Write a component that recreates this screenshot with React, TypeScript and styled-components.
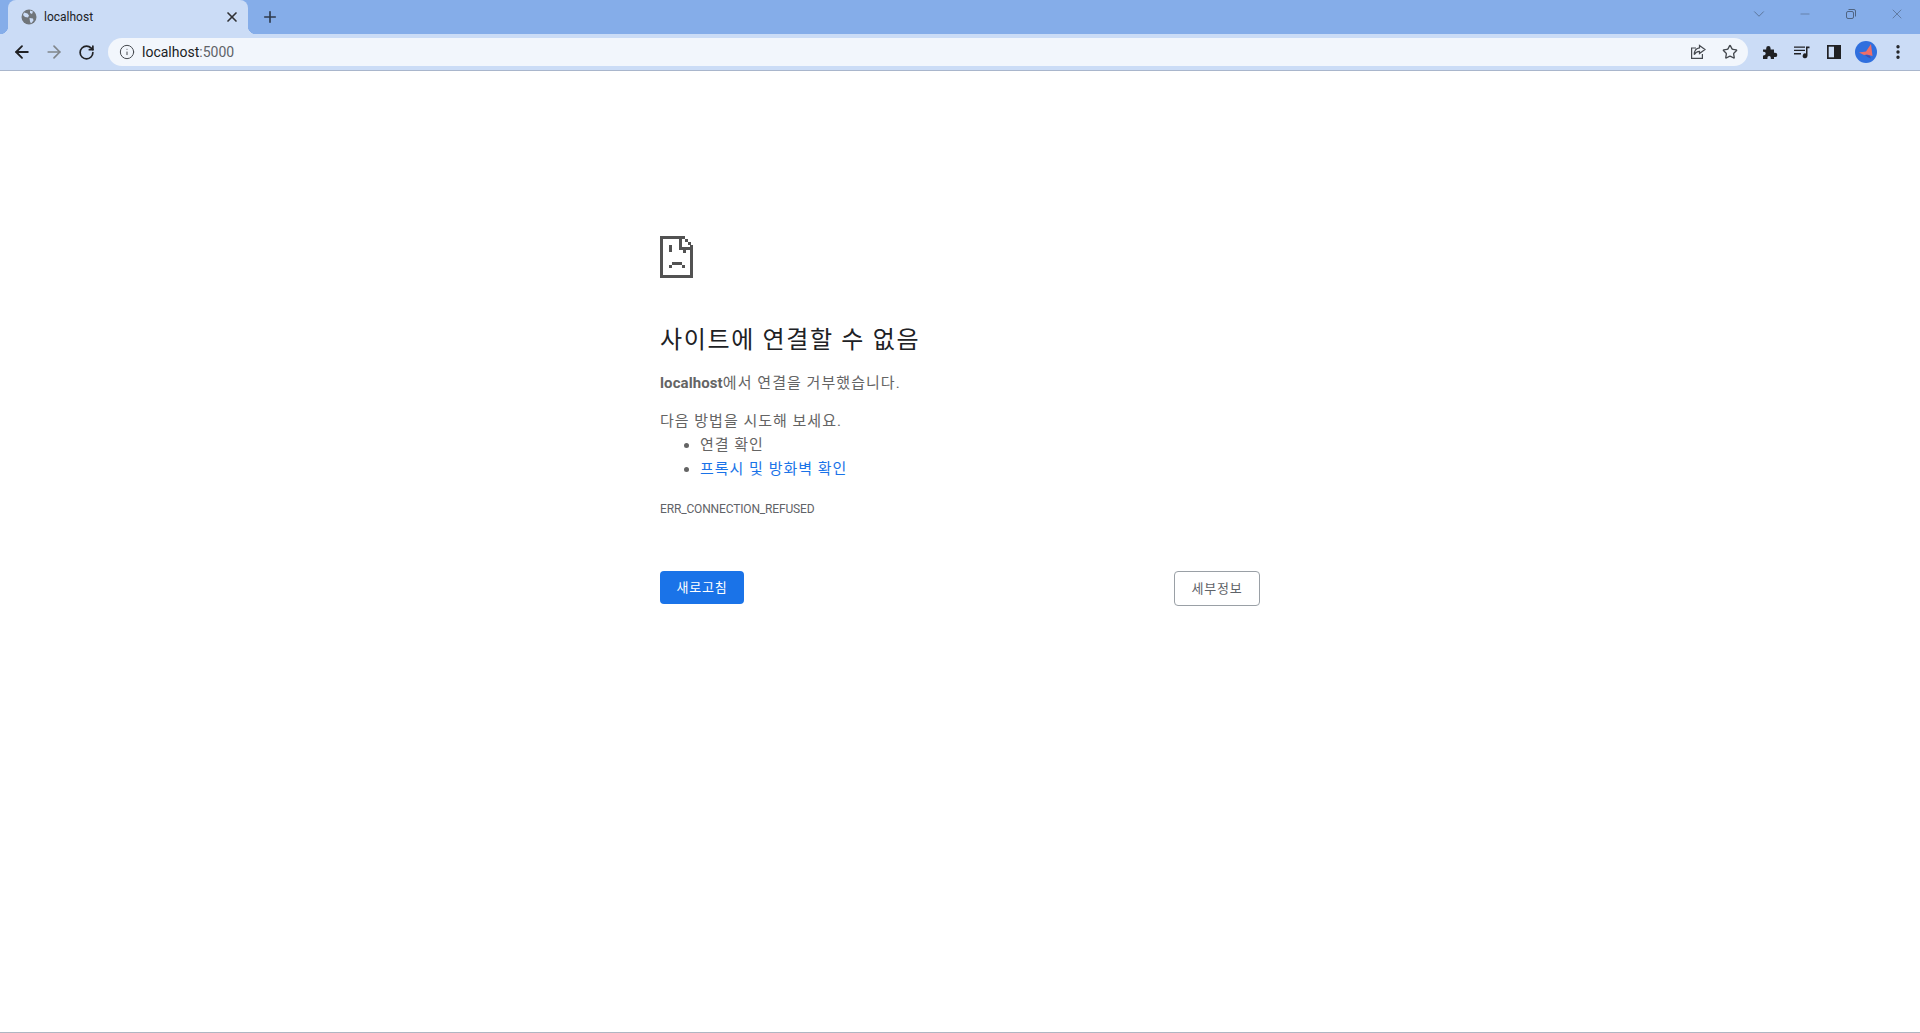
import styled, { createGlobalStyle } from 'styled-components';
import { ArrowLeft, ArrowRight, RotateCw, Info, Plus, X, ChevronDown, Minus, Star, EllipsisVertical } from 'lucide-react';

const GlobalStyle = createGlobalStyle`
  html, body {
    margin: 0;
    height: 100%;
    background: #fff;
  }
  body {
    font-family: Roboto, 'Noto Sans CJK KR', sans-serif;
  }
`;

function Globe() {
  return (
    <svg width="16" height="16" viewBox="0 0 16 16">
      <circle cx="8" cy="8" r="7.5" fill="#70757a" />
      <path d="M3 3.5l3.5 1 1.5 2-1 2-3-.5-2-2zM9 1.5l3 1-1 2.5-2-1zM8.5 9l3.5.5.5 2-2.5 3-1-2z" fill="#cbdcf6" />
    </svg>
  );
}

function ShareIcon() {
  return (
    <svg width="16" height="16" viewBox="0 0 16 16" fill="none" stroke="#45494f" strokeWidth="1.2">
      <path d="M6 4H1.6v10.4h10.8V10" />
      <path d="M9.5 1.5L15 5.5l-5.500 4V7.300C7.500 7.300 5.600 8.200 4.200 10.600 4.400 7 6.500 4.200 9.500 3.900z" />
    </svg>
  );
}

function Puzzle() {
  return (
    <svg width="16" height="16" viewBox="0 0 16 16" fill="#202124">
      <path d="M1 5.500h3.200V4.200a2.200 2.200 0 0 1 4.400 0v1.300h3.400v3.200h1.100a2.200 2.200 0 0 1 0 4.400H12V15H8.800v-1.200a1.700 1.700 0 0 0-3.400 0V15H1v-3.600h.9a1.800 1.800 0 0 0 0-3.600H1z" />
    </svg>
  );
}

function MediaQueue() {
  return (
    <svg width="16" height="16" viewBox="0 0 16 16" fill="#202124">
      <path d="M0 2.500h11v1.300H0zM0 5.800h11v1.300H0zM0 9.100h7v1.300H0zM12 2.500h3.500v1.700h-2v7.600a2.400 2.400 0 1 1-1.500-2.200z" />
    </svg>
  );
}

function SidePanel() {
  return (
    <svg width="14" height="14" viewBox="0 0 14 14">
      <path d="M0 0h14v14H0z" fill="#202124" />
      <path d="M1.700 1.700h5.300v10.600H1.700z" fill="#cbdcf6" />
    </svg>
  );
}

function Avatar() {
  return (
    <svg width="22" height="22" viewBox="0 0 22 22">
      <circle cx="11" cy="11" r="11" fill="#2f6fde" />
      <path d="M4 11.500l7-1 5-7.500 1.500 12-5.500-1.500-3 .5z" fill="#ee6e68" />
      <path d="M10 14l4.500 .5 1.500 3-3.500-1.500z" fill="#3c4fb0" />
    </svg>
  );
}

function RestoreIcon() {
  return (
    <svg width="10" height="10" viewBox="0 0 10 10" fill="none" stroke="#4f6482" strokeWidth="1">
      <rect x="0.5" y="2.5" width="7" height="7" rx="1.5" />
      <path d="M2.500 .5h5.500a1.500 1.500 0 0 1 1.500 1.500v5.500" />
    </svg>
  );
}

function SadPage() {
  return (
    <svg width="33" height="42" viewBox="0 0 33 42" fill="#525252" shapeRendering="crispEdges">
      {/* page outline */}
      <path d="M0 0h19v3H3v36h27V14h3v28H0z" />
      {/* folded corner */}
      <path d="M19 0h3v11h11v3H19zM22 0h3v3h-3zM25 3h3v3h-3zM28 6h3v3h-3zM30 9h3v3h-3z" />
      {/* eyes */}
      <path d="M9 9h3v7H9zM23 14h3v3h-3z" />
      {/* mouth */}
      <path d="M12 26h10v3H12zM9 29h3v3H9zM22 29h3v3h-3z" />
    </svg>
  );
}

export default function App() {
  return (
    <>
      <GlobalStyle />
      <Window>
        <TabStrip>
          <Tab>
            <Globe />
            <TabTitle>localhost</TabTitle>
            <TabClose>
              <X size={16} strokeWidth={2.5} color="#303134" />
            </TabClose>
          </Tab>
          <NewTab>
            <Plus size={18} strokeWidth={2.2} color="#2f3a4c" />
          </NewTab>
          <Spacer />
          <WindowButton>
            <ChevronDown size={18} strokeWidth={1} color="#4f6482" />
          </WindowButton>
          <WindowButton>
            <Minus size={14} strokeWidth={1} color="#4f6482" />
          </WindowButton>
          <WindowButton>
            <RestoreIcon />
          </WindowButton>
          <WindowButton>
            <X size={16} strokeWidth={1} color="#4f6482" />
          </WindowButton>
        </TabStrip>
        <Toolbar>
          <NavButton>
            <ArrowLeft size={20} strokeWidth={2.2} color="#202124" />
          </NavButton>
          <NavButton>
            <ArrowRight size={20} strokeWidth={2} color="#80868b" />
          </NavButton>
          <NavButton>
            <RotateCw size={17} strokeWidth={2.4} color="#202124" />
          </NavButton>
          <Omnibox>
            <Info size={16} strokeWidth={1.5} color="#45494f" />
            <Url>
              localhost<UrlPort>:5000</UrlPort>
            </Url>
            <OmniIcons>
              <ShareIcon />
              <Star size={16} strokeWidth={2} color="#45494f" />
            </OmniIcons>
          </Omnibox>
          <ToolIcons>
            <ToolIcon>
              <Puzzle />
            </ToolIcon>
            <ToolIcon>
              <MediaQueue />
            </ToolIcon>
            <ToolIcon>
              <SidePanel />
            </ToolIcon>
            <ToolIcon>
              <Avatar />
            </ToolIcon>
            <ToolIcon>
              <EllipsisVertical size={18} strokeWidth={2.5} color="#202124" />
            </ToolIcon>
          </ToolIcons>
        </Toolbar>
        <Page>
          <ErrorBlock>
            <SadPage />
            <Heading>사이트에 연결할 수 없음</Heading>
            <Message>
              <strong>localhost</strong>에서 연결을 거부했습니다.
            </Message>
            <Suggest>다음 방법을 시도해 보세요.</Suggest>
            <SuggestList>
              <li>연결 확인</li>
              <li>
                <SuggestLink href="#">프록시 및 방화벽 확인</SuggestLink>
              </li>
            </SuggestList>
            <ErrorCode>ERR_CONNECTION_REFUSED</ErrorCode>
            <Buttons>
              <ReloadButton>새로고침</ReloadButton>
              <DetailsButton>세부정보</DetailsButton>
            </Buttons>
          </ErrorBlock>
        </Page>
      </Window>
    </>
  );
}

const Window = styled.div`
  height: 1033px;
  display: flex;
  flex-direction: column;
  overflow: hidden;
  border-bottom: 1px solid #aeb6c2;
  box-sizing: border-box;
`;

const TabStrip = styled.div`
  height: 34px;
  flex: none;
  background: #85ade9;
  display: flex;
  align-items: flex-end;
  padding-left: 8px;
`;

const Tab = styled.div`
  width: 240px;
  height: 34px;
  box-sizing: border-box;
  padding: 0 8px 0 13px;
  background: #cbdcf6;
  border-radius: 8px 8px 0 0;
  display: flex;
  align-items: center;
  position: relative;
  &::before,
  &::after {
    content: '';
    position: absolute;
    bottom: 0;
    width: 8px;
    height: 8px;
  }
  &::before {
    left: -8px;
    background: radial-gradient(circle at 0 0, transparent 8px, #cbdcf6 8.5px);
  }
  &::after {
    right: -8px;
    background: radial-gradient(circle at 100% 0, transparent 8px, #cbdcf6 8.5px);
  }
`;

const TabTitle = styled.span`
  flex: 1;
  margin-left: 7px;
  font-size: 12px;
  color: #202124;
`;

const TabClose = styled.span`
  display: flex;
`;

const NewTab = styled.div`
  width: 28px;
  height: 34px;
  margin-left: 8px;
  display: flex;
  align-items: center;
  justify-content: center;
`;

const Spacer = styled.div`
  flex: 1;
`;

const WindowButton = styled.div`
  width: 46px;
  height: 28px;
  align-self: flex-start;
  display: flex;
  align-items: center;
  justify-content: center;
`;

const Toolbar = styled.div`
  height: 37px;
  flex: none;
  box-sizing: border-box;
  background: #cbdcf6;
  border-bottom: 1px solid #a9b6cc;
  display: flex;
  align-items: center;
  padding-left: 6px;
`;

const NavButton = styled.div`
  width: 32px;
  height: 28px;
  display: flex;
  align-items: center;
  justify-content: center;
`;

const Omnibox = styled.div`
  flex: 1;
  height: 28px;
  margin-left: 6px;
  padding: 0 10px 0 11px;
  background: #f2f6fc;
  border-radius: 14px;
  display: flex;
  align-items: center;
`;

const Url = styled.span`
  flex: 1;
  margin-left: 7px;
  font-size: 14px;
  color: #202124;
`;

const UrlPort = styled.span`
  color: #5f6368;
`;

const OmniIcons = styled.div`
  display: flex;
  align-items: center;
  gap: 16px;
`;

const ToolIcons = styled.div`
  display: flex;
  align-items: center;
  margin-left: 6px;
  margin-right: 6px;
`;

const ToolIcon = styled.div`
  width: 32px;
  height: 28px;
  display: flex;
  align-items: center;
  justify-content: center;
`;

const Page = styled.main`
  flex: 1;
  display: flex;
  justify-content: center;
`;

const ErrorBlock = styled.div`
  width: 600px;
  padding-top: 165px;
  color: #646464;
  font-size: 15px;
  line-height: 24px;
`;

const Heading = styled.h1`
  margin: 39px 0 0;
  font-size: 24px;
  line-height: 32px;
  font-weight: 400;
  letter-spacing: 1.65px;
  color: #202124;
`;

const Message = styled.p`
  margin: 15px 0 0;
  letter-spacing: 1.05px;
  strong {
    font-weight: 700;
    letter-spacing: 0.1px;
  }
`;

const Suggest = styled.p`
  margin: 14px 0 0;
  letter-spacing: 1px;
`;

const SuggestList = styled.ul`
  margin: 0;
  padding-left: 40px;
  letter-spacing: 1px;
`;

const SuggestLink = styled.a`
  color: #1a73e8;
  text-decoration: none;
`;

const ErrorCode = styled.div`
  margin-top: 16px;
  font-size: 12px;
  line-height: 24px;
  letter-spacing: -0.15px;
  color: #5f6368;
`;

const Buttons = styled.div`
  margin-top: 50px;
  display: flex;
  justify-content: space-between;
  align-items: flex-start;
`;

const ReloadButton = styled.button`
  width: 84px;
  height: 33px;
  padding: 0;
  border: none;
  border-radius: 4px;
  background: #1a73e8;
  color: #fff;
  font: inherit;
  font-size: 13px;
  letter-spacing: 0.8px;
`;

const DetailsButton = styled.button`
  width: 86px;
  height: 35px;
  padding: 0;
  border: 1px solid #9aa0a6;
  border-radius: 4px;
  background: #fff;
  color: #5f6368;
  font: inherit;
  font-size: 13px;
  letter-spacing: 0.8px;
`;
